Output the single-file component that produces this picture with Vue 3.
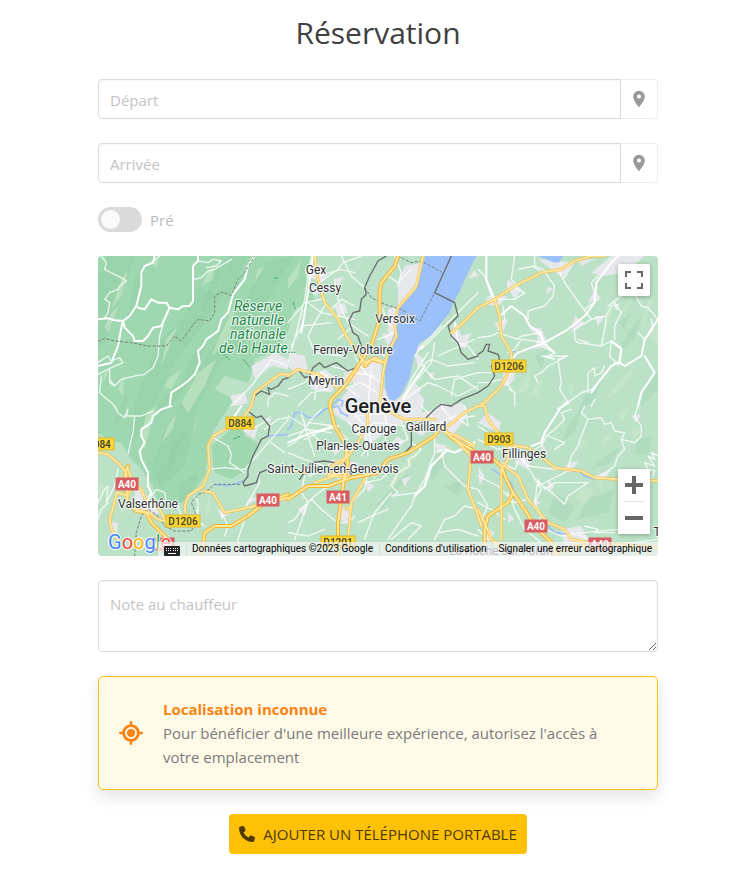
<script setup>
import { ref } from 'vue'

const depart = ref('')
const arrivee = ref('')
const pre = ref(false)
const note = ref('')

// Each entry is [x origin, y origin, path]; geometry is drawn at three times the map's size.
const hills = [
  [0, 0, 'M0 60L30 0H110L70 110L30 240L0 280ZM180 260L260 180L300 90L370 120L310 220L240 300L190 400L130 520L90 580L110 440ZM400 0H450L400 110L350 130ZM500 20L590 0L540 80L470 200L440 260L360 330L300 450L240 580L190 700L160 640L200 520L270 400L330 290L420 180Z'],
]
const shades = [
  [0, 0, 'M280 300L330 250L290 360L220 450L190 480L180 440L250 380ZM110 60L140 40L115 130L90 180ZM350 30L400 0L350 110L310 170Z'],
  [0, 450, 'M220 130L290 40L260 180L200 240ZM240 240L300 200L280 260L250 300ZM60 10L90 -40L80 20L40 70Z'],
  [1140, 0, 'M450 230L490 180L470 250L420 290ZM420 200L460 170L440 220ZM330 400L370 370L350 430L300 470ZM500 380L540 350V400L490 450ZM170 300L210 280L190 340Z'],
  [1140, 450, 'M270 60L310 10L290 80L250 110ZM380 150L430 120L400 170L340 190ZM230 260L290 300L260 350L210 320ZM330 280L410 250L390 320L300 340ZM480 100L520 90L510 150L470 140Z'],
  [570, 450, 'M330 220L370 200L290 300L240 330ZM430 190L460 150L480 160L430 230ZM470 240L530 220L510 270Z'],
]
const ridges = [
  [0, 0, 'M70 70L90 40L70 120L40 160ZM40 170L60 150L30 230L20 210ZM160 20L185 0L175 35ZM330 50L350 20L345 70L310 90ZM205 250L240 210L215 270L190 330ZM210 370L250 340L220 400L200 390ZM395 180L410 150L390 260L340 300L370 230ZM300 350L355 310L320 390L270 470L250 440ZM20 350L35 340L10 390ZM480 40L500 30L470 80ZM60 400L80 350L75 420Z'],
  [0, 450, 'M130 90L145 20L175 0L150 90L140 130ZM0 80L30 100L10 130ZM210 60L235 20L225 70L190 110ZM60 300L90 280L80 330ZM290 60L300 30L285 90ZM0 250L20 230L10 290ZM330 280L345 290L320 340Z'],
  [570, 0, 'M20 40L40 10L30 60L0 100V70ZM50 100L60 90L20 150Z'],
  [570, 450, 'M380 130L390 150L320 240L290 250ZM320 250L330 240L250 340L200 370Z'],
  [1140, 0, 'M395 150L420 110L390 220L370 240ZM460 130L485 90L450 160L410 190ZM500 150L530 120L490 230ZM130 380L160 340L150 400L110 420ZM190 370L200 350L180 420L160 410ZM440 360L480 320L430 400L380 430ZM520 240L540 200V270ZM270 390L290 380L280 420Z'],
  [1140, 450, 'M300 110L330 100L310 130ZM380 80L400 100L370 120ZM290 270L320 240L350 260L310 300ZM350 230L380 210L370 250ZM460 70L490 60L470 110ZM420 20L460 0L430 50Z'],
]
const towns = [
  [0, 0, 'M460 330L530 290L570 310V340L520 330L470 370ZM395 420L440 410L450 440L410 450Z'],
  [570, 0, 'M50 40L90 20L120 60L100 80L60 60ZM60 90L110 100L80 120ZM350 30L400 20V80L370 120L330 150V80ZM300 160L330 150V230L300 250ZM280 230L320 240L300 270ZM10 290L50 300L60 340L20 350L0 330ZM60 360L110 340L150 370L130 410L70 400ZM140 70L170 60L150 90ZM140 150L170 140L180 170L150 180ZM220 310L280 320V410L200 400L190 360ZM280 400L330 430L380 380L400 400L370 450H250ZM380 290L410 310L390 340ZM490 250L500 190L520 240L550 230L530 280ZM540 70L560 40L570 60ZM420 350L440 350L430 370ZM360 260L410 270L380 290Z'],
  [570, 450, 'M130 20L150 -10L190 -60L280 -60L330 -20L380 -50L410 -20L400 20L440 10L430 40L340 50L290 80L250 110L210 90L180 50ZM430 20L460 -10L490 0L520 -10L540 10L530 40L500 80L520 110L470 80L440 60L400 90L370 70L400 30ZM130 160L210 170L200 200L150 220ZM130 110L160 130L140 150ZM300 120L330 90L350 110L320 130ZM30 310L60 290L50 330ZM150 300L190 310L180 350L150 340ZM440 110L480 120L450 140ZM240 190L270 180L260 220ZM340 220L370 210L350 240ZM230 220L260 240L240 260Z'],
  [1140, 0, 'M30 120L90 120L60 150L20 145ZM90 70L130 100L110 130L85 90ZM180 10L290 20L260 70L220 40ZM340 50L400 0H500L440 50L370 60ZM350 100L370 130L330 140ZM290 180L320 200L280 230ZM150 215L190 215L210 270L170 280L180 240ZM50 200L90 190L70 240ZM350 180L380 180L360 210ZM280 430L250 440L270 450ZM80 330L110 320L110 370L90 390L70 390ZM210 90L225 100L205 115ZM300 10L350 10L310 30Z'],
  [1140, 450, 'M30 20L70 50L60 80L0 50ZM190 110L210 140L190 150ZM120 140L160 150L150 190L110 170ZM270 170L300 165L280 200L255 195ZM0 130L30 150L20 170ZM350 210L400 190L380 220ZM0 180L20 210L5 240ZM460 30L490 25L475 50ZM210 220L230 240L210 260ZM250 370L310 360L330 400L260 430ZM90 320L110 340L90 350ZM20 360L50 380L30 410ZM170 280L190 290L165 300Z'],
  [0, 450, 'M110 250L130 240L150 280L190 320L140 330L110 300ZM430 60L480 60L470 100L440 80ZM360 310L400 320L370 340ZM460 270L480 280L440 300ZM40 350L60 350L55 390L40 380ZM500 40L520 30L515 60Z'],
]
const minor = [
  [0, 0, 'M10 0L25 20L20 40L50 55L70 65L85 75L65 90L60 100L35 110L20 130L35 140L30 170L20 185M0 320L30 300L40 315L65 305L75 320L40 335L0 355M35 340L35 380L50 390L70 370L110 360L140 355L165 335L180 300L185 240L195 205M10 360L5 410L40 440L50 450M50 390L35 370M300 15L330 20L345 10L370 15L355 30L325 35M290 70L310 65L330 45L350 40L400 10M160 20L185 0M570 330L545 320L520 310L490 350L460 390L430 420L400 450M510 450V430L530 410L570 420'],
  [0, 450, 'M50 0L60 20L80 35L90 10L85 30L130 30L165 15M110 30L105 80L95 120L90 145M0 290L20 250L30 240L25 290L50 240L60 190M260 360L300 320L300 290L290 270M160 270L175 250L200 260L205 290L240 300L250 330M330 190L380 185L430 190L450 190M345 95L390 120L400 145L395 170L440 200M440 75L480 60L510 40M370 320L390 360L380 390M480 200L485 230L450 290L440 310M440 190L520 100L570 40M500 70L540 40L570 35M520 110L560 140M0 340L10 310L30 290M300 300L290 340L320 360M440 340L420 400L430 450'],
  [570, 0, 'M70 0L60 60L50 130L35 190L20 250L0 320M95 80L150 40L165 20L220 0M90 60L160 40L200 50M160 0L190 60L230 95M100 130L50 140L0 200M60 140L100 170L150 180L200 190M140 70L150 130L170 180L190 215L150 250M180 200L240 240M110 150L80 200L60 240L80 290L160 300M10 270L40 210L130 200M200 150L160 130L130 160M320 0L340 50L330 90M300 60L330 80L370 40M280 150L300 200L320 220M420 290L370 370L345 430M400 280L440 240L490 190L570 110M400 330L430 310L480 330L560 320M380 300L410 260L460 210M410 340L440 370L510 360L570 400M350 430L420 380L450 390L510 420L570 390M440 260L430 320L380 380M500 200L510 260L540 270L570 310M450 300L560 250M60 370L100 350L170 390L210 420M90 360L80 430M130 330L200 350L260 360M200 300L230 350L280 380M250 330L240 450M160 400L220 380L280 420M30 450L70 410L120 400M0 400L50 380L70 360M270 250L320 230M260 280L290 300M490 420L500 370L570 350'],
  [570, 450, 'M0 90L60 70L130 80M40 20L60 90L80 150M0 30L50 60L110 120L180 130M100 10L70 40L20 110L0 120M180 50L220 70L260 50L350 60M190 10L230 60L240 150M250 0L240 60L250 110L220 150M280 0L300 60L290 110M200 30L310 20L340 0M340 50L360 100L300 120M440 60L440 140L410 220L380 270L370 300L320 370L300 400M370 110L400 130L380 150L360 160L365 180L330 200L320 220L310 240L330 260L310 270L390 260M470 130L440 140M440 60L500 30L540 60L530 0M460 0L490 40L560 30M400 0L430 30L450 90M0 140L50 160L110 180M60 210L90 200L130 170M180 210L120 240L80 270L40 310L20 340L0 350M50 210L40 260L60 290L20 400M70 280L100 310L150 350L180 350L200 330M240 190L230 250L200 280L180 310M230 230L280 220L310 190M310 260L260 320L240 370L230 400M0 380L60 390L110 370M80 190L70 210M360 400L400 360L370 350L310 400M440 400L470 340L500 330L530 300L570 310M450 380L510 370L570 390M460 130L470 180L530 240L570 250M180 100L130 60L50 100M60 50L140 60M300 310L250 330L210 350'],
  [1140, 0, 'M110 0L100 70L120 90L90 100L60 130M170 0L170 35L205 55L230 90L225 120L200 150L150 165L150 190M205 45L170 30L120 40M110 95L140 110L110 130L60 130M245 50L260 80L310 150L340 190L380 180M370 270L380 220L385 180L400 150L420 145L415 160L410 140L430 170L425 180L410 210L410 250M340 190L290 220L290 250L300 260L370 270L400 255L430 275L420 330M400 255L395 300L415 320M360 130L320 160M360 60L340 80L350 110M430 120L390 150M490 90L470 115L490 150L510 155L540 190M520 190L525 220L500 250L480 230M330 410L330 350L350 335L350 360L370 350L380 330M270 440L310 410L350 400L360 380L410 320M360 380L340 400L310 410M190 300L230 310L210 300L230 290L190 270M200 300L270 300L240 310L250 380L245 400L270 440M180 380L170 360L190 350L210 330L270 300M0 245L40 240L60 230L120 250L130 240L190 230M75 150L80 190L60 220M90 290L110 280L130 250L200 260M0 40L20 60L40 120M100 400L80 370L100 350M350 430L340 450M0 350L40 350L60 310M95 400L110 410V450M0 380L30 380L70 370M300 250L330 260'],
  [1140, 450, 'M280 10L250 20L260 40L230 70L205 90L190 120L170 130M320 0L310 20L330 40L310 90L300 120L280 150L270 190M330 40L370 35L380 55L400 50L410 75L440 80L430 100M480 0L470 30L490 60L490 90L470 110L430 100M430 100L440 130L420 150L410 180L370 210M540 150L520 140L530 160L510 150L530 180L500 170L510 190L530 195L520 220M180 220L170 290L190 330L180 350M180 230L210 250L260 295L270 270L330 230L230 230L200 250L180 220M180 240L260 200L270 190M120 150L150 180L230 190L280 190M130 150L190 250L170 290M70 170L110 190L120 170M0 100L60 130L110 120M0 60L60 100M0 210L60 240L110 290L150 280M90 260L110 310L140 370L190 410L230 440M0 290L40 310L80 340M30 400L0 370M0 150L50 160M200 370L250 390L320 380L420 370L500 360M320 360L360 370L350 380L410 380M0 250L30 300L10 340M280 380L340 400L400 420L540 400M230 130L260 110L210 90'],
]
const white = [
  [0, 0, 'M170 0L165 20L140 30L130 50V90L115 150L95 180L75 195L70 215L60 270L40 320L0 330M0 190L30 187L50 193L75 195L80 215L105 240L110 255L135 255L150 240L165 215L190 210L215 155L240 160L255 150L275 150L285 135V70L285 30L300 15V0M470 0L450 30L440 70L405 115L390 170L370 190L360 225L325 250L315 270L300 285L305 320L290 355L270 375L250 390L220 410L215 450M120 155L140 160L160 130L180 140L205 140L215 155'],
  [0, 450, 'M220 0L190 10L165 30L160 50L130 70L130 90L140 110L125 135L130 160L150 200L150 240L160 260L150 280M430 0L390 60'],
  [570, 0, 'M75 0L60 110L40 230M345 430L375 380L410 330'],
  [570, 450, 'M480 130L430 180L410 240L380 270M0 110L70 80L150 60M560 110L500 140L470 130'],
  [1140, 0, 'M25 0V70L50 130M65 180L100 150L140 180L155 210L185 230L200 265L230 290M100 310L120 290L200 260L270 220L320 180L350 140L355 80L400 20L420 0M400 255L430 280L425 320L440 330L490 300L500 250L540 190M420 320L400 330L360 380L340 410M500 300L530 350L490 410L480 450M100 310L110 330M270 440L240 460'],
  [1140, 450, 'M245 10L200 80L190 110L160 120'],
]
const yellow = [
  [0, 0, 'M570 355L545 355L510 380L470 410L460 450'],
  [0, 450, 'M460 0L440 30L400 60L345 90L330 120L335 190L315 240L270 270L260 300L262 320M315 255L345 260L380 320L450 305L570 275M0 140L30 145L70 180L85 200L90 270M90 190L100 220L95 260M95 225L130 250L150 300M60 250L35 340L40 370L60 400M90 270L60 260M110 310L150 320L180 340L220 350M160 285L180 300L200 340'],
  [570, 0, 'M80 0L90 70L110 140L150 190L175 240L215 300L230 320M0 360L30 340L90 355L150 395M405 0L385 90L330 155L320 210L325 240L300 290L285 350L280 400L275 450M230 320L260 305L290 320M490 230L520 205L570 155'],
  [570, 450, 'M180 150L210 110L240 50L235 0M0 190L50 200M130 210L170 160L180 130M180 210L140 210L80 230M230 220L190 290L180 400M175 310L190 300M440 40L350 40L270 0M480 60L530 20L570 0M500 100L550 150L540 250L570 330M470 80L510 90L560 120M180 150L130 180L120 210L170 200'],
  [1140, 0, 'M0 155L50 130L110 90L190 50L250 40L290 15L340 0L380 0M50 130L65 180L70 240L100 290V330L70 390L20 440L0 450'],
  [1140, 450, 'M20 0L30 40L60 80L85 120L90 160L70 190L70 400M85 115L150 125L200 160L230 185L310 195L350 215L420 220L540 225M80 180L120 210L150 280L210 350L260 370L280 400L330 410M0 0L20 0M0 310L20 350L40 400L70 420M0 330L10 360'],
]
const motorway = [
  [570, 0, 'M330 0L320 30L280 80L275 110L275 190L250 270L210 330L170 390L130 430L125 450M230 330L250 310L290 320'],
  [0, 450, 'M90 180L80 210L90 290L115 315L145 320L160 350L190 380L210 400M310 450L320 380L350 360L400 360L450 330L500 290L570 265'],
  [570, 450, 'M125 0L140 60L170 110L180 170L170 220M0 280L60 240L120 240L190 215L270 200L300 160L360 140L440 90L460 60L490 95L550 130L570 145M170 200L160 280L150 350V450'],
  [1140, 450, 'M0 145L40 155L70 180L85 220L105 260L140 310L170 360L220 410L240 450M105 260L90 290L30 330L20 370L20 450M230 440L350 410L540 425'],
]
const borders = [
  [0, 0, 'M570 365L555 370L540 390L520 400L510 395L515 415L490 405L470 420L462 450'],
  [0, 450, 'M462 0L450 15L475 35L490 30L515 60L510 90L490 100L465 150L450 190V210L435 230L440 240L475 230L485 200L510 190'],
  [570, 0, 'M295 0L270 15L245 60L230 95L235 115L220 130L215 165L195 170L183 195L195 230L210 240L220 270L215 330L180 345L145 320L110 335L95 320L75 335L65 360L50 365L30 340L0 365M490 0L440 110L500 140L510 180L480 210L490 240L510 260L520 290L540 310L570 300M570 410L520 430L490 450'],
  [570, 450, 'M35 220L70 170L110 165L140 170L165 165L190 205M280 180L300 160L350 140L370 120V60L400 50L410 40L440 10L460 -5L490 0'],
  [1140, 0, 'M0 295L15 285L25 265L35 265L30 285L60 295L65 310L40 330L50 360L30 390L0 410'],
]
const dashed = [
  [0, 0, 'M0 255L20 248L50 255L100 260L150 270L205 270L230 240L250 255L290 200L300 190L335 195L350 170V120L370 108L400 118L420 70L440 50L470 0'],
  [570, 0, 'M330 0L370 20L400 15L460 48M230 95L250 125L290 145L340 160L395 195L440 110'],
  [0, 450, 'M110 450L115 380L130 330L150 310L180 330L200 360L230 375L280 375L300 340L280 290L300 265L320 260L350 235L430 235'],
]
const rivers = [
  [570, 450, 'M0 70L10 60L20 20L40 20L60 35L80 35L110 10L150 0L160 20L180 30'],
  [570, 0, 'M130 450L150 430L165 435L160 450'],
  [1140, 450, 'M45 190L100 230L110 270M200 350L230 380L270 385M300 190L320 210L350 220'],
  [0, 450, 'M350 235L390 240L435 225M510 90L570 85'],
  [1140, 0, 'M95 290L110 285'],
]
const layers = [
  { name: 'hill', items: hills },
  { name: 'shade', items: shades },
  { name: 'ridge', items: ridges },
  { name: 'town', items: towns },
  { name: 'river', items: rivers },
]
const roadLayers = [
  { name: 'minor', items: minor },
  { name: 'white', items: white },
  { name: 'dashed', items: dashed },
  { name: 'border', items: borders },
  { name: 'yellow-edge', items: yellow },
  { name: 'motorway-edge', items: motorway },
  { name: 'yellow', items: yellow },
  { name: 'motorway', items: motorway },
]

const places = [
  { name: 'Gex', x: 218, y: 18 },
  { name: 'Cessy', x: 227, y: 36 },
  { name: 'Versoix', x: 297, y: 67 },
  { name: 'Ferney-Voltaire', x: 255, y: 98 },
  { name: 'Meyrin', x: 228, y: 129 },
  { name: 'Carouge', x: 276, y: 177 },
  { name: 'Gaillard', x: 328, y: 175 },
  { name: 'Plan-les-Ouates', x: 260, y: 194 },
  { name: 'Saint-Julien-en-Genevois', x: 235, y: 217 },
  { name: 'Valserhône', x: 50, y: 252 },
  { name: 'Fillinges', x: 426, y: 202 },
  { name: 'La Roche-sur-Foron', x: 403, y: 299 },
  { name: 'T', x: 559, y: 280 },
]
const reserve = ['Réserve', 'naturelle', 'nationale', 'de la Haute…']
const shields = [
  { name: 'D884', x: 142, y: 167, w: 28 },
  { name: 'D084', x: 1, y: 188, w: 30 },
  { name: 'D1206', x: 85, y: 265, w: 34 },
  { name: 'D1206', x: 411, y: 110, w: 34 },
  { name: 'D903', x: 401, y: 183, w: 28 },
  { name: 'D1201', x: 240, y: 286, w: 34 },
  { name: 'A40', x: 29, y: 228, w: 22, red: true },
  { name: 'A40', x: 65, y: 288, w: 22, red: true },
  { name: 'A40', x: 170, y: 244, w: 22, red: true },
  { name: 'A41', x: 240, y: 241, w: 22, red: true },
  { name: 'A40', x: 384, y: 201, w: 22, red: true },
  { name: 'A40', x: 438, y: 270, w: 22, red: true },
  { name: 'A40', x: 502, y: 288, w: 22, red: true },
]
</script>

<template>
  <main class="page">
    <form class="booking" @submit.prevent>
      <h1 class="title">Réservation</h1>

      <div class="address">
        <input v-model="depart" class="control address-input" type="text" placeholder="Départ" aria-label="Départ" />
        <button class="address-button" type="button" aria-label="Localiser le départ">
          <svg class="pin" viewBox="0 0 24 24" aria-hidden="true">
            <path d="M12 11.5A2.5 2.5 0 0 1 9.5 9 2.5 2.5 0 0 1 12 6.5 2.5 2.5 0 0 1 14.5 9 2.5 2.5 0 0 1 12 11.5M12 2A7 7 0 0 0 5 9c0 5.25 7 13 7 13s7-7.75 7-13a7 7 0 0 0-7-7Z" />
          </svg>
        </button>
      </div>

      <div class="address">
        <input v-model="arrivee" class="control address-input" type="text" placeholder="Arrivée" aria-label="Arrivée" />
        <button class="address-button" type="button" aria-label="Localiser l'arrivée">
          <svg class="pin" viewBox="0 0 24 24" aria-hidden="true">
            <path d="M12 11.5A2.5 2.5 0 0 1 9.5 9 2.5 2.5 0 0 1 12 6.5 2.5 2.5 0 0 1 14.5 9 2.5 2.5 0 0 1 12 11.5M12 2A7 7 0 0 0 5 9c0 5.25 7 13 7 13s7-7.75 7-13a7 7 0 0 0-7-7Z" />
          </svg>
        </button>
      </div>

      <label class="switch">
        <input v-model="pre" class="switch-input" type="checkbox" disabled />
        <span>Pré</span>
      </label>

      <section class="map" aria-label="Carte">
        <svg class="map-drawing" viewBox="0 0 560 300" preserveAspectRatio="xMidYMid slice">
          <rect class="land" width="560" height="300" />
          <g transform="scale(0.33333)">
            <path class="forest" d="M0 0H645L620 50L650 130L620 160L590 150L570 230L540 280L470 310L455 370L400 440L350 520L330 560L325 650L300 690L250 740L180 740L165 690L130 640L90 600L70 560L0 550ZM400 520L460 500L440 540L480 560L450 640L400 670L350 650L340 570Z" />
            <path class="clearing" d="M350 400L380 360L450 380L440 400L410 430Z" />
            <g v-for="layer in layers" :key="layer.name">
              <path v-for="(item, i) in layer.items" :key="i" :class="layer.name" :d="item[2]" :transform="`translate(${item[0]} ${item[1]})`" />
            </g>
            <path class="airport" d="M735 370L740 350L785 335L800 345L755 385Z" />
            <path class="lake" d="M982 0L968 50L955 100L900 160L895 220L870 280L861 330L862 400L872 430L890 435L910 415L935 365L950 300L965 260L1000 240L1030 200L1055 170L1066 140L1083 110L1110 50L1135 0ZM1320 0L1370 20L1385 18L1395 0Z" />
            <g v-for="layer in roadLayers" :key="layer.name">
              <path v-for="(item, i) in layer.items" :key="i" :class="layer.name" :d="item[2]" :transform="`translate(${item[0]} ${item[1]})`" />
            </g>
            <path class="trail" d="M375 292L395 312M435 310L455 332M530 65L542 68M586 140L592 160M408 548L425 542" />
          </g>
          <g v-for="shield in shields" :key="`${shield.name}-${shield.x}`">
            <rect :class="['shield', { 'shield-red': shield.red }]" :x="shield.x - shield.w / 2" :y="shield.y - 6" :width="shield.w" height="12" />
            <text :class="['shield-text', { 'shield-text-red': shield.red }]" :x="shield.x" :y="shield.y + 4">{{ shield.name }}</text>
          </g>
          <text v-for="(line, i) in reserve" :key="line" class="reserve" x="160" :y="55 + i * 14">{{ line }}</text>
          <text v-for="place in places" :key="place.name" class="place" :x="place.x" :y="place.y">{{ place.name }}</text>
          <text class="city" x="280" y="157">Genève</text>
        </svg>

        <button class="map-button fullscreen" type="button" aria-label="Plein écran">
          <svg viewBox="0 0 18 18" aria-hidden="true"><path d="M0 0v6h2V2h4V0H0zm16 0h-4v2h4v4h2V0h-2zm0 16h-4v2h6v-6h-2v4zM2 12H0v6h6v-2H2v-4z" /></svg>
        </button>

        <div class="zoom">
          <button class="map-button" type="button" aria-label="Zoom avant">
            <svg viewBox="0 0 18 18" aria-hidden="true"><path d="M7 0h4v7h7v4h-7v7H7v-7H0V7h7z" /></svg>
          </button>
          <span class="zoom-line"></span>
          <button class="map-button" type="button" aria-label="Zoom arrière">
            <svg viewBox="0 0 18 18" aria-hidden="true"><path d="M0 7h18v4H0z" /></svg>
          </button>
        </div>

        <a class="google" href="#" aria-label="Google"><span class="blue">G</span><span class="red">o</span><span class="gold">o</span><span class="blue">g</span><span class="green">l</span><span class="red">e</span></a>

        <div class="legal">
          <button class="legal-item keyboard" type="button" aria-label="Raccourcis clavier">
            <svg viewBox="0 0 16 10" aria-hidden="true">
              <rect width="16" height="10" rx="1" fill="#222" />
              <path d="M2 2h1v1H2zM4 2h1v1H4zM6 2h1v1H6zM9 2h1v1H9zM11 2h1v1h-1zM13 2h1v1h-1zM2 4h1v1H2zM4 4h1v1H4zM6 4h1v1H6zM9 4h1v1H9zM11 4h1v1h-1zM13 4h1v1h-1zM4 7h8v1H4z" fill="#fff" />
            </svg>
          </button>
          <span class="legal-item">Données cartographiques ©2023 Google</span>
          <a class="legal-item" href="#">Conditions d'utilisation</a>
          <a class="legal-item" href="#">Signaler une erreur cartographique</a>
        </div>
      </section>

      <textarea v-model="note" class="control note" rows="2" placeholder="Note au chauffeur" aria-label="Note au chauffeur"></textarea>

      <div class="alert" role="alert">
        <svg class="target" viewBox="0 0 24 24" aria-hidden="true">
          <circle cx="12" cy="12" r="7.4" fill="none" stroke="currentColor" stroke-width="2.8" />
          <circle cx="12" cy="12" r="4" fill="currentColor" />
          <path d="M12 1.3v3M12 19.7v3M1.3 12h3M19.7 12h3" stroke="currentColor" stroke-width="2.6" stroke-linecap="round" />
        </svg>
        <div>
          <strong class="alert-title">Localisation inconnue</strong>
          <p class="alert-text">Pour bénéficier d'une meilleure expérience, autorisez l'accès à votre emplacement</p>
        </div>
      </div>

      <button class="submit" type="button">
        <svg class="phone" viewBox="0 0 512 512" aria-hidden="true">
          <path d="M164.9 24.6c-7.7-18.6-28-28.5-47.4-23.2l-88 24C12.1 30.2 0 46 0 64C0 311.4 200.6 512 448 512c18 0 33.8-12.1 38.6-29.5l24-88c5.3-19.4-4.6-39.7-23.2-47.4l-96-40c-16.3-6.8-35.2-2.1-46.3 11.6L304.7 368C234.3 334.7 177.3 277.7 144 207.3L193.3 167c13.7-11.2 18.4-30 11.6-46.3l-40-96z" />
        </svg>
        Ajouter un téléphone portable
      </button>
    </form>
  </main>
</template>

<style>
body {
  margin: 0;
  background: #fff;
}
</style>

<style scoped>
.page {
  padding: 12px 85px 32px 98px;
  font-family: "Open Sans", "Noto Sans", sans-serif;
  font-size: 15px;
  line-height: 24px;
  color: #4a4a4a;
}
.booking {
  display: flex;
  flex-direction: column;
  gap: 24px;
  max-width: 640px;
  margin: 0 auto;
}
.title {
  margin: 0 0 2px;
  font-size: 30px;
  font-weight: 400;
  line-height: 41px;
  text-align: center;
  color: #404040;
}
.control {
  box-sizing: border-box;
  border: 1px solid #dbdbdb;
  border-radius: 4px;
  background: #fff;
  box-shadow: inset 0 1px 2px rgba(10, 10, 10, 0.05);
  font: inherit;
  color: #363636;
}
.control::placeholder {
  color: #c3c3c3;
  opacity: 1;
}
.address {
  display: flex;
  height: 40px;
}
.address-input {
  flex: 1;
  min-width: 0;
  padding: 2px 11px 0;
  border-radius: 4px 0 0 4px;
}
.address-button {
  display: flex;
  align-items: center;
  justify-content: center;
  width: 37px;
  padding: 0;
  border: 1px solid #ededed;
  border-left: 0;
  border-radius: 0 4px 4px 0;
  background: #fff;
}
.pin {
  width: 20px;
  height: 20px;
  fill: #9a9a9a;
}
.switch {
  display: flex;
  align-items: center;
  gap: 8px;
  height: 25px;
  color: #bcbcbc;
}
.switch-input {
  appearance: none;
  display: flex;
  align-items: center;
  box-sizing: border-box;
  width: 44px;
  height: 25px;
  margin: 0;
  padding: 3px;
  border-radius: 13px;
  background: #dadada;
}
.switch-input::before {
  content: "";
  width: 19px;
  height: 19px;
  border-radius: 50%;
  background: #fafafa;
}
.map {
  position: relative;
  height: 300px;
  overflow: hidden;
  border-radius: 4px;
  font-family: Roboto, sans-serif;
}
.map-drawing {
  display: block;
  width: 100%;
  height: 100%;
}
.land { fill: #bbe2c6; }
.forest { fill: #9fd8b0; }
.clearing { fill: #bbe2c6; }
.hill { fill: #97d1a9; fill-opacity: 0.7; }
.shade { fill: #7bb893; fill-opacity: 0.16; }
.ridge { fill: #cae8c8; fill-opacity: 0.6; }
.town { fill: #e6e8ec; }
.airport { fill: #ece5d8; }
.lake { fill: #9cc0f9; }
.river,
.minor,
.white,
.dashed,
.border,
.trail,
.yellow,
.yellow-edge,
.motorway,
.motorway-edge {
  fill: none;
  stroke-linejoin: round;
  stroke-linecap: round;
}
.river { stroke: #9cc0f9; stroke-width: 5; }
.minor { stroke: #fff; stroke-width: 4; stroke-opacity: 0.8; }
.white { stroke: #fff; stroke-width: 6; }
.border { stroke: #686c6d; stroke-width: 4; }
.dashed { stroke: #71817a; stroke-width: 3; stroke-dasharray: 7 7; }
.trail { stroke: #3aa564; stroke-width: 3; stroke-dasharray: 8 5; }
.yellow-edge { stroke: #f5bd48; stroke-width: 9; }
.yellow { stroke: #ffeba9; stroke-width: 5; }
.motorway-edge { stroke: #f6b32f; stroke-width: 12; }
.motorway { stroke: #ffe99d; stroke-width: 6; }
.shield {
  fill: #fdd835;
  stroke: #e0b52c;
  stroke-width: 1;
}
.shield-red {
  fill: #d95d60;
  stroke: #d95d60;
}
.shield-text {
  font-size: 10px;
  font-weight: 500;
  text-anchor: middle;
  fill: #40402c;
}
.shield-text-red {
  font-weight: 700;
  fill: #fff;
}
.place,
.city,
.reserve {
  text-anchor: middle;
  stroke: #fff;
  stroke-width: 2px;
  stroke-opacity: 0.85;
  stroke-linejoin: round;
  paint-order: stroke;
}
.place {
  font-size: 12px;
  fill: #2c2f33;
}
.city {
  font-size: 20px;
  font-weight: 500;
  fill: #202124;
}
.reserve {
  font-size: 14px;
  font-style: italic;
  fill: #1b8747;
}
.map-button {
  display: flex;
  align-items: center;
  justify-content: center;
  width: 32px;
  height: 32px;
  padding: 0;
  border: 0;
  background: #fff;
}
.map-button svg {
  width: 18px;
  height: 18px;
  fill: #666;
}
.fullscreen {
  position: absolute;
  top: 8px;
  right: 8px;
  border-radius: 2px;
  box-shadow: 0 1px 4px rgba(0, 0, 0, 0.3);
}
.zoom {
  position: absolute;
  right: 8px;
  bottom: 22px;
  display: flex;
  flex-direction: column;
  border-radius: 2px;
  background: #fff;
  box-shadow: 0 1px 4px rgba(0, 0, 0, 0.3);
}
.zoom-line {
  height: 1px;
  margin: 0 5px;
  background: #e6e6e6;
}
.google {
  position: absolute;
  left: 10px;
  bottom: 2px;
  font-size: 20px;
  line-height: 24px;
  text-decoration: none;
  text-shadow: 0 0 1px #fff, 1px 0 1px #fff, -1px 0 1px #fff, 0 1px 1px #fff, 0 -1px 1px #fff;
}
.blue { color: #4285f4; }
.red { color: #ea4335; }
.gold { color: #f4b400; }
.green { color: #34a853; }
.legal {
  position: absolute;
  right: 0;
  bottom: 0;
  display: flex;
  font-size: 10px;
  line-height: 14px;
  white-space: nowrap;
}
.legal-item {
  height: 14px;
  padding: 0 6px;
  background: rgba(245, 245, 245, 0.7);
  color: #000;
  text-decoration: none;
}
.legal-item + .legal-item {
  box-shadow: inset 1px 0 #d4e0d8;
}
.keyboard {
  display: flex;
  align-items: flex-end;
  border: 0;
}
.keyboard svg {
  width: 16px;
  height: 10px;
}
.note {
  display: block;
  width: 100%;
  height: 72px;
  padding: 11px;
  resize: vertical;
}
.alert {
  display: flex;
  align-items: center;
  gap: 20px;
  padding: 20px;
  border: 1px solid #fdc010;
  border-radius: 5px;
  background: #fffae8;
  box-shadow: 0 8px 16px rgba(10, 10, 10, 0.1);
}
.target {
  flex: none;
  width: 24px;
  height: 24px;
  color: #fb8214;
}
.alert-title {
  display: block;
  font-weight: 700;
  color: #fb8214;
}
.alert-text {
  margin: 0;
  color: #7b7b7b;
}
.submit {
  display: flex;
  align-items: center;
  align-self: center;
  gap: 8px;
  height: 40px;
  padding: 0 10px;
  border: 0;
  border-radius: 4px;
  background: #ffc107;
  font: inherit;
  text-transform: uppercase;
  color: #4d3a02;
}
.phone {
  width: 16px;
  height: 16px;
  fill: currentColor;
}
</style>
